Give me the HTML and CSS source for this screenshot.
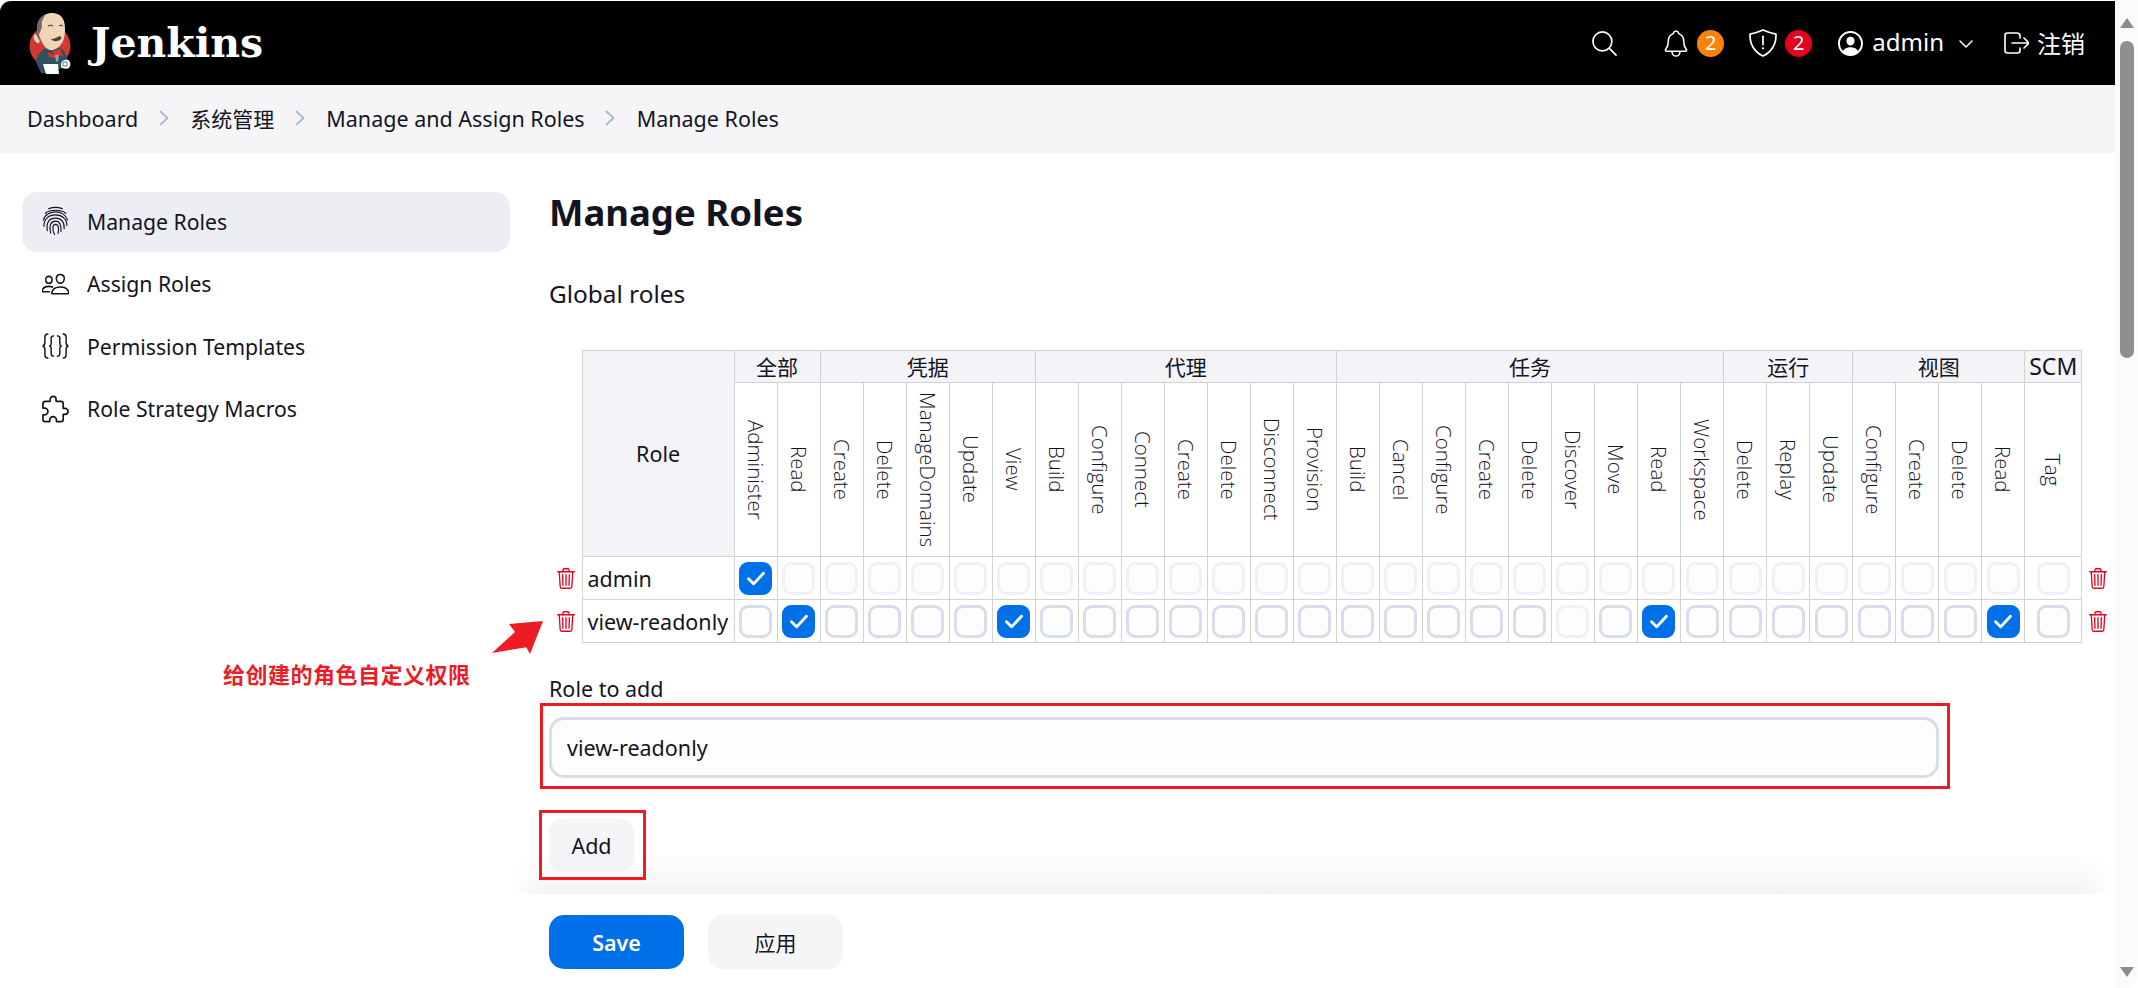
FILE: index.html
```html
<!DOCTYPE html>
<html lang="zh">
<head>
<meta charset="utf-8">
<title>Manage Roles</title>
<link rel="stylesheet" href="styles.css">
</head>
<body>
<svg class="defs" width="0" height="0" aria-hidden="true">
  <symbol id="trash" viewBox="64 32 384 448"><g fill="none" stroke="currentColor" stroke-width="28" stroke-linecap="round" stroke-linejoin="round"><path d="M112 112l20 320c.95 18.49 14.4 32 32 32h184c17.67 0 30.87-13.51 32-32l20-320"/><path d="M80 112h352"/><path d="M192 112V72a23.93 23.93 0 0124-24h80a23.93 23.93 0 0124 24v40M256 176v224M184 176l8 224M328 176l-8 224"/></g></symbol>
  <symbol id="check" viewBox="0 0 16 16"><path d="M3 8.500l3.400 3.400L13 4.800" fill="none" stroke="#fff" stroke-width="1.900" stroke-linecap="round" stroke-linejoin="round"/></symbol>
  <symbol id="crumb" viewBox="0 0 10 16"><path d="M1.5 1.5L8.5 8l-7 6.5" fill="none" stroke="#a7b9cf" stroke-width="1.8" stroke-linecap="round" stroke-linejoin="round"/></symbol>
</svg>
<div class="frame">
  <div class="page">
    <header class="topbar">
      <div class="brand">
        <svg class="logo" viewBox="0 0 44 62" aria-hidden="true">
          <circle cx="21" cy="34" r="20.5" fill="#d33833"/>
          <path d="M7 50c1-8 6-13 12-15l12 1c5 3 7 7 8 13l-2 7-8 1-3 4H12z" fill="#335061"/>
          <path d="M9 20C6 8 15 1 23 1c8 0 13 5 13 15 0 4 0 9-2 13-2 5-8 10-13 9-5-1-9-8-12-18z" fill="#f0d6b7"/>
          <path d="M9 24C6 13 9 5 17 2c-3 4-5 8-4 13-1 3-2 6-4 9z" fill="#6d6b6d"/>
          <path d="M7 22c-3-1-4 6 1 9 2 1 3-1 3-2z" fill="#f0d6b7" stroke="#49728b" stroke-width=".6"/>
          <path d="M19 14c2-1 4-1 5 0M30 14c1-1 3-1 4 0" fill="none" stroke="#2a2a2a" stroke-width="1"/>
          <path d="M22 27c3 0 6-2 9-3 1 1 2 2 1 3-3 3-8 3-10 0z" fill="#54403a"/>
          <path d="M19 40l6 3-1-4 7-2 3 7-6-1-2 3-6-1z" fill="#e2322f"/>
          <path d="M26 43l4 0-1 6-2 1z" fill="#8fa3ad"/>
          <path d="M14 52h15l1 10H17z" fill="#fff"/>
          <path d="M32 52c0-3 4-5 7-4 3 1 3 6 1 8-2 1-6 1-8-1z" fill="#f4f4f4"/>
          <path d="M34 50h4v4h-4z" fill="none" stroke="#49728b" stroke-width=".8"/>
        </svg>
        <span class="brand-name">Jenkins</span>
      </div>
      <nav class="actions">
        <svg class="ic ic-search" viewBox="48 48 416 416"><g fill="none" stroke="#fff" stroke-width="28"><path d="M221.09 64a157.09 157.09 0 10157.09 157.09A157.1 157.1 0 00221.09 64z"/><path stroke-linecap="round" d="M338.29 338.29L448 448"/></g></svg>
        <svg class="ic ic-bell" viewBox="64 32 384 448"><path d="M427.68 351.43C402 320 383.87 304 383.87 217.35 383.87 138 343.35 109.73 310 96c-4.43-1.82-8.6-6-9.95-10.55C294.2 65.54 277.8 48 256 48s-38.21 17.55-44 37.47c-1.35 4.6-5.52 8.71-9.95 10.53-33.39 13.75-73.87 41.92-73.87 121.35C128.13 304 110 320 84.32 351.43 73.68 364.45 83 384 101.61 384h308.88c18.51 0 27.77-19.61 17.19-32.57zM320 384v16a64 64 0 01-128 0v-16" fill="none" stroke="#fff" stroke-width="26" stroke-linecap="round" stroke-linejoin="round"/></svg>
        <span class="badge badge-warn">2</span>
        <svg class="ic ic-shield" viewBox="32 32 448 448"><g fill="none" stroke="#fff" stroke-width="28" stroke-linecap="round" stroke-linejoin="round"><path d="M463.1 112.37C373.68 96.33 336.71 84.45 256 48c-80.71 36.45-117.68 48.33-207.1 64.37C32.7 369.13 240.58 457.79 256 464c15.42-6.21 223.3-94.87 207.1-351.63z"/><path d="M256 150v130"/></g><circle cx="256" cy="340" r="18" fill="#fff"/></svg>
        <span class="badge badge-danger">2</span>
        <svg class="ic ic-user" viewBox="48 48 416 416"><path fill="#fff" d="M258.9 48C141.92 46.42 46.42 141.92 48 258.9c1.56 112.19 92.91 203.54 205.1 205.1 117 1.6 212.48-93.9 210.88-210.88C462.44 140.91 371.09 49.56 258.9 48zm126.42 327.25a4 4 0 01-6.14-.32 124.27 124.27 0 00-32.35-29.59C321.37 329 289.11 320 256 320s-65.37 9-90.83 25.34a124.24 124.24 0 00-32.35 29.58 4 4 0 01-6.14.32A175.32 175.32 0 0180 259c-1.63-97.31 78.22-178.76 175.57-179S432 158.81 432 256a175.32 175.32 0 01-46.68 119.25z"/><path fill="#fff" d="M256 144c-19.72 0-37.55 7.39-50.22 20.82s-19 32-17.57 51.93C191.11 256 221.52 288 256 288s64.83-32 67.79-71.25c1.48-19.74-4.8-38.14-17.68-51.82C293.39 151.44 275.59 144 256 144z"/></svg>
        <span class="user-name">admin</span>
        <svg class="ic ic-chev" viewBox="0 0 14 8"><path d="M1 1l6 6 6-6" fill="none" stroke="#fff" stroke-width="1.5" stroke-linecap="round" stroke-linejoin="round"/></svg>
        <svg class="ic ic-logout" viewBox="48 80 400 352"><path d="M304 336v40a40 40 0 01-40 40H104a40 40 0 01-40-40V136a40 40 0 0140-40h152c22.09 0 48 17.91 48 40v40M368 336l80-80-80-80M176 256h256" fill="none" stroke="#fff" stroke-width="26" stroke-linecap="round" stroke-linejoin="round"/></svg>
        <span class="logout-text">注销</span>
      </nav>
    </header>
    <div class="crumbs">
      <span>Dashboard</span><svg class="crumb-sep"><use href="#crumb"/></svg>
      <span class="zh">系统管理</span><svg class="crumb-sep"><use href="#crumb"/></svg>
      <span>Manage and Assign Roles</span><svg class="crumb-sep"><use href="#crumb"/></svg>
      <span>Manage Roles</span>
    </div>
    <div class="content">
      <aside class="side">
        <a class="side-item active">
          <svg class="side-ic" viewBox="0 0 28 30"><g fill="none" stroke="#14141f" stroke-width="1.2" stroke-linecap="round"><path d="M7 2.200C11 .6 17 .6 21 2.200"/><path d="M3.500 7C8 2.800 20 2.800 24.500 7"/><path d="M1.500 14C3 8 9 5.500 14 5.500c6 0 11 3.500 12.500 8.500"/><path d="M2 20.500C1.800 13 7 8.700 14 8.700s12 4.300 11.800 11"/><path d="M5.500 25C4 16 8 12 14 12s9.500 4 9 11"/><path d="M9 27.500C7 19 9.500 15.200 14 15.200S20 19 19.700 26"/><path d="M13 29c-2.500-5-2.500-10.500 1-10.500s3.500 4 2.700 9.500"/></g></svg>
          <span>Manage Roles</span>
        </a>
        <a class="side-item">
          <svg class="side-ic" viewBox="32 90 448 330"><g fill="none" stroke="#14141f" stroke-width="26" stroke-linecap="round" stroke-linejoin="round"><path d="M402 168c-2.93 40.67-33.1 72-66 72s-63.12-31.32-66-72c-3-42.31 26.37-72 66-72s69 30.46 66 72z"/><path d="M336 304c-65.17 0-127.84 32.37-143.54 95.41-2.08 8.34 3.15 16.59 11.72 16.59h263.65c8.57 0 13.77-8.25 11.72-16.59C463.85 336.360 401.18 304 336 304z"/><path d="M200 185.94c-2.34 32.48-26.72 58.060-53 58.060s-50.7-25.57-53-58.060C91.61 152.15 115.340 128 147 128s55.39 24.77 53 57.94z"/><path d="M206 306c-18.05-8.27-37.93-11.45-59-11.45-52 0-102.1 25.85-114.65 76.2-1.65 6.66 2.53 13.25 9.37 13.25H154"/></g></svg>
          <span>Assign Roles</span>
        </a>
        <a class="side-item">
          <svg class="side-ic" viewBox="0 0 28 28"><g fill="none" stroke="#14141f" stroke-width="1.5" stroke-linecap="round" stroke-linejoin="round"><path d="M6 1.500C3.500 1.500 3 3 3 5v5c0 2-.5 3.500-2 4 1.500.5 2 2 2 4v5c0 2 .5 3.500 3 3.500"/><path d="M12 3.500C10 3.500 9.500 4.500 9.500 6v5.500c0 1.500-.5 2.200-1.500 2.500 1 .3 1.500 1 1.500 2.500V22c0 1.500.5 2.500 2.500 2.500"/><path d="M22 1.500c2.500 0 3 1.500 3 3.500v5c0 2 .5 3.500 2 4-1.500.5-2 2-2 4v5c0 2-.5 3.500-3 3.500"/><path d="M16 3.500c2 0 2.500 1 2.500 2.500v5.500c0 1.500.5 2.200 1.500 2.500-1 .3-1.500 1-1.500 2.500V22c0 1.500-.5 2.500-2.500 2.500"/></g></svg>
          <span>Permission Templates</span>
        </a>
        <a class="side-item">
          <svg class="side-ic" viewBox="32 32 448 448"><path d="M413.66 246.1H386a2 2 0 01-2-2v-77.24A38.86 38.86 0 00345.14 128H267.9a2 2 0 01-2-2V98.34c0-27.14-21.5-49.86-48.64-50.33a49.53 49.53 0 00-50.4 49.53V126a2 2 0 01-2 2H87.62A39.74 39.74 0 0048 167.62V238a2 2 0 002 2h26.91c29.37 0 53.68 25.48 54.09 54.85.42 29.87-23.51 57.15-53.29 57.15H50a2 2 0 00-2 2v70.38A39.74 39.74 0 0087.62 464H158a2 2 0 002-2v-20.93c0-30.28 24.75-56.35 55-57.06 30.1-.7 57 20.31 57 50.28V462a2 2 0 002 2h71.14A38.86 38.86 0 00384 425.14v-78a2 2 0 012-2h28.48c27.63 0 49.52-22.67 49.52-50.4s-23.2-48.64-50.34-48.64z" fill="none" stroke="#14141f" stroke-width="28" stroke-linecap="round" stroke-linejoin="round"/></svg>
          <span>Role Strategy Macros</span>
        </a>
      </aside>
      <main class="main">
        <div class="form">
          <h1 class="title">Manage Roles</h1>
          <h2 class="subtitle">Global roles</h2>
          <table class="roles">
            <colgroup>
              <col class="c-del"><col class="c-role">
              <col class="c"><col class="c"><col class="c"><col class="c"><col class="c"><col class="c"><col class="c"><col class="c"><col class="c"><col class="c"><col class="c"><col class="c"><col class="c"><col class="c"><col class="c"><col class="c"><col class="c"><col class="c"><col class="c"><col class="c"><col class="c"><col class="c"><col class="c"><col class="c"><col class="c"><col class="c"><col class="c"><col class="c"><col class="c"><col class="c">
              <col class="c-scm"><col class="c-del">
            </colgroup>
            <thead>
              <tr class="groups">
                <td class="blank" rowspan="2"></td>
                <th class="role-head" rowspan="2">Role</th>
                <th colspan="2">全部</th><th colspan="5">凭据</th><th colspan="7">代理</th><th colspan="9">任务</th><th colspan="3">运行</th><th colspan="4">视图</th><th class="scm">SCM</th>
                <td class="blank" rowspan="2"></td>
              </tr>
              <tr class="perms">
                <th><span>Administer</span></th><th><span>Read</span></th>
                <th><span>Create</span></th><th><span>Delete</span></th><th><span>ManageDomains</span></th><th><span>Update</span></th><th><span>View</span></th>
                <th><span>Build</span></th><th><span>Configure</span></th><th><span>Connect</span></th><th><span>Create</span></th><th><span>Delete</span></th><th><span>Disconnect</span></th><th><span>Provision</span></th>
                <th><span>Build</span></th><th><span>Cancel</span></th><th><span>Configure</span></th><th><span>Create</span></th><th><span>Delete</span></th><th><span>Discover</span></th><th><span>Move</span></th><th><span>Read</span></th><th><span>Workspace</span></th>
                <th><span>Delete</span></th><th><span>Replay</span></th><th><span>Update</span></th>
                <th><span>Configure</span></th><th><span>Create</span></th><th><span>Delete</span></th><th><span>Read</span></th>
                <th><span>Tag</span></th>
              </tr>
            </thead>
            <tbody>
              <tr class="row-muted">
                <td class="blank del-l"><svg class="trash"><use href="#trash"/></svg></td>
                <td class="name">admin</td>
                <td><span class="cb on"><svg><use href="#check"/></svg></span></td>
                <td><span class="cb"></span></td><td><span class="cb"></span></td><td><span class="cb"></span></td><td><span class="cb"></span></td><td><span class="cb"></span></td><td><span class="cb"></span></td>
                <td><span class="cb"></span></td><td><span class="cb"></span></td><td><span class="cb"></span></td><td><span class="cb"></span></td><td><span class="cb"></span></td><td><span class="cb"></span></td><td><span class="cb"></span></td>
                <td><span class="cb"></span></td><td><span class="cb"></span></td><td><span class="cb"></span></td><td><span class="cb"></span></td><td><span class="cb"></span></td><td><span class="cb"></span></td><td><span class="cb"></span></td><td><span class="cb"></span></td><td><span class="cb"></span></td>
                <td><span class="cb"></span></td><td><span class="cb"></span></td><td><span class="cb"></span></td>
                <td><span class="cb"></span></td><td><span class="cb"></span></td><td><span class="cb"></span></td><td><span class="cb"></span></td>
                <td><span class="cb"></span></td>
                <td class="blank del-r"><svg class="trash"><use href="#trash"/></svg></td>
              </tr>
              <tr>
                <td class="blank del-l"><svg class="trash"><use href="#trash"/></svg></td>
                <td class="name">view-readonly</td>
                <td><span class="cb"></span></td>
                <td><span class="cb on"><svg><use href="#check"/></svg></span></td>
                <td><span class="cb"></span></td><td><span class="cb"></span></td><td><span class="cb"></span></td><td><span class="cb"></span></td>
                <td><span class="cb on"><svg><use href="#check"/></svg></span></td>
                <td><span class="cb"></span></td><td><span class="cb"></span></td><td><span class="cb"></span></td><td><span class="cb"></span></td><td><span class="cb"></span></td><td><span class="cb"></span></td><td><span class="cb"></span></td>
                <td><span class="cb"></span></td><td><span class="cb"></span></td><td><span class="cb"></span></td><td><span class="cb"></span></td><td><span class="cb"></span></td>
                <td><span class="cb faint"></span></td>
                <td><span class="cb"></span></td>
                <td><span class="cb on"><svg><use href="#check"/></svg></span></td>
                <td><span class="cb"></span></td>
                <td><span class="cb"></span></td><td><span class="cb"></span></td><td><span class="cb"></span></td>
                <td><span class="cb"></span></td><td><span class="cb"></span></td><td><span class="cb"></span></td>
                <td><span class="cb on"><svg><use href="#check"/></svg></span></td>
                <td><span class="cb"></span></td>
                <td class="blank del-r"><svg class="trash"><use href="#trash"/></svg></td>
              </tr>
            </tbody>
          </table>
          <label class="field-label" for="role-name">Role to add</label>
          <input class="field" id="role-name" type="text" value="view-readonly">
          <button class="btn btn-add" type="button">Add</button>
        </div>
        <div class="bar">
          <button class="btn btn-save" type="button">Save</button>
          <button class="btn btn-apply" type="button">应用</button>
        </div>
      </main>
    </div>
  </div>
  <div class="scrollbar">
    <span class="arrow arrow-up"></span>
    <span class="thumb"></span>
    <span class="arrow arrow-down"></span>
  </div>
</div>
<div class="mark mark-input"></div>
<div class="mark mark-add"></div>
<svg class="note-arrow" viewBox="0 0 54 36" aria-hidden="true"><path d="M52 1L18 4l6 8L1 33l33-5.500 1.500 0L39 34z" fill="#ed1c24"/></svg>
<div class="note">给创建的角色自定义权限</div>
</body>
</html>
```
FILE: styles.css
```css
* { box-sizing: border-box; }
html, body { margin: 0; height: 100%; overflow: hidden; background: #fff; }
body {
  font-family: "Noto Sans", "Noto Sans CJK SC", sans-serif;
  font-size: 21.500px;
  color: #14141f;
  position: relative;
}
.defs { position: absolute; }
.frame {
  display: flex;
  height: 987px;
  margin-top: 1px;
  border-radius: 11px 0 11px 0;
  overflow: hidden;
}
.page { flex: 1; min-width: 0; display: flex; flex-direction: column; }

/* top bar */
.topbar {
  height: 84px;
  flex: none;
  background: #000;
  color: #fff;
  display: flex;
  align-items: center;
  justify-content: space-between;
  padding: 0 30px 0 29px;
}
.brand { display: flex; align-items: center; gap: 18px; }
.logo { width: 44px; height: 62px; }
.brand-name {
  font-family: "DejaVu Serif", serif;
  font-weight: 700;
  font-size: 41px;
  line-height: 1;
}
.actions { display: flex; align-items: center; }
.ic { display: block; flex: none; }
.ic-search { width: 25px; height: 25px; }
.ic-bell { width: 24px; height: 27px; margin-left: 47px; }
.badge {
  width: 27px; height: 27px; border-radius: 50%;
  margin-left: 9px;
  display: flex; align-items: center; justify-content: center;
  color: #fff; font-size: 20px; line-height: 1;
}
.badge-warn { background: #fe820a; }
.badge-danger { background: #e6001f; margin-left: 8px; }
.ic-shield { width: 28px; height: 28px; margin-left: 25px; }
.ic-user { width: 25px; height: 25px; margin-left: 26px; }
.user-name { margin-left: 9px; font-size: 24px; line-height: 1; margin-top: -2px; }
.ic-chev { width: 14px; height: 8px; margin-left: 15px; margin-top: 2px; }
.ic-logout { width: 25px; height: 22px; margin-left: 31px; }
.logout-text { margin-left: 8px; font-size: 24px; line-height: 1; font-family: "Noto Sans CJK SC", sans-serif; }

/* breadcrumbs */
.crumbs {
  height: 68px;
  flex: none;
  background: #f5f5f8;
  display: flex;
  align-items: center;
  padding: 0 0 2px 27px;
}
.crumbs .zh { font-size: 21px; font-family: "Noto Sans CJK SC", sans-serif; }
.crumb-sep { width: 10px; height: 16px; margin: 0 21.500px 0 20.500px; flex: none; }

/* layout */
.content { flex: 1; min-height: 0; display: flex; }
.side { width: 549px; flex: none; padding: 39px 39px 0 22px; display: flex; flex-direction: column; gap: 2.500px; }
.side-item {
  height: 60px;
  border-radius: 15px;
  display: flex;
  align-items: center;
  padding: 0 0 2px 20px;
  gap: 18px;
  font-size: 21.200px;
}
.side-item.active { background: #edeef3; }
.side-ic { width: 27px; height: 30px; flex: none; }
.main { flex: 1; min-width: 0; display: flex; flex-direction: column; }
.form { flex: 1; min-height: 0; }
.title { margin: 36px 0 0; font-size: 36.500px; line-height: 46px; font-weight: 700; }
.subtitle { margin: 44px 0 0; font-size: 24.400px; line-height: 30px; font-weight: 400; }

/* matrix */
.roles {
  border-collapse: collapse;
  table-layout: fixed;
  width: 1566px;
  margin-top: 41px;
}
.c-del { width: 33px; }
.c-role { width: 152px; }
.c { width: 43px; }
.c-scm { width: 57px; }
.roles th, .roles td { border: 1px solid #d2d2ce; padding: 0; text-align: center; font-weight: 400; }
.roles .blank { border: 0; }
.groups th { height: 32px; background: #f3f3f8; font-family: "Noto Sans CJK SC", "Noto Sans", sans-serif; font-size: 21px; line-height: 1; }
.groups .role-head { font-family: "Noto Sans", sans-serif; font-size: 21.500px; }
.groups .scm { font-family: "Noto Sans", sans-serif; font-size: 23px; }
.perms th { height: 174px; background: #fff; }
.perms span {
  display: inline-block;
  writing-mode: vertical-rl;
  font-family: "Open Sans", "Noto Sans", sans-serif;
  font-weight: 300;
  font-size: 20.500px;
  line-height: 1;
  vertical-align: middle;
  color: #14141f;
}
.roles tbody td { height: 43px; }
.roles tbody .name { text-align: left; padding-left: 5px; white-space: nowrap; overflow: hidden; }
.cb {
  display: inline-flex;
  align-items: center;
  justify-content: center;
  width: 33px;
  height: 33px;
  border: 3px solid #d7deea;
  border-radius: 9px;
  background: #fdfdfd;
  vertical-align: middle;
}
.row-muted .cb, .cb.faint { border-color: #eff1f6; }
.cb.on, .row-muted .cb.on { background: #0070e8; border-color: #0070e8; }
.cb svg { width: 24px; height: 24px; display: block; flex: none; }
.trash { width: 18px; height: 21px; color: #e6001f; display: block; }
.del-l .trash { margin: 0 0 0 8px; }
.del-r .trash { margin: 0 0 0 7px; }

/* form */
.field-label { display: block; margin-top: 32px; line-height: 28px; }
.field {
  display: block;
  width: 1390px;
  height: 61px;
  margin-top: 14px;
  border: 3px solid #d7deea;
  border-radius: 15px;
  background: #fdfdfd;
  padding: 0 15px;
  font: inherit;
  color: inherit;
  outline: 0;
}
.btn { display: block; border: 0; border-radius: 15px; font: inherit; padding: 0; color: inherit; }
.btn-add { width: 85px; height: 54px; margin-top: 40px; background: #f5f5f8; }
.bar {
  flex: none;
  height: 94px;
  margin-right: 20px;
  background: #fff;
  display: flex;
  gap: 24px;
  padding-top: 21px;
  position: relative;
}
.bar::before {
  content: "";
  position: absolute;
  left: -35px;
  right: -15px;
  bottom: 100%;
  height: 42px;
  pointer-events: none;
  background: linear-gradient(to bottom, rgba(240, 240, 242, 0), rgba(240, 240, 242, .8));
  -webkit-mask-image: linear-gradient(to right, transparent, #000 30px, #000 calc(100% - 30px), transparent);
  mask-image: linear-gradient(to right, transparent, #000 30px, #000 calc(100% - 30px), transparent);
}
.btn-save { width: 135px; height: 54px; background: #0070e8; color: #fff; font-weight: 600; }
.btn-apply { width: 135px; height: 54px; background: #f5f5f8; font-family: "Noto Sans CJK SC", sans-serif; font-size: 21px; }

/* scrollbar */
.scrollbar {
  width: 23px;
  flex: none;
  background: #fbfbfb;
  display: flex;
  flex-direction: column;
  align-items: center;
  padding: 17px 0 11px;
}
.arrow { width: 0; height: 0; border-left: 7px solid transparent; border-right: 7px solid transparent; }
.arrow-up { border-bottom: 10px solid #8c8c8c; }
.arrow-down { border-top: 10px solid #8c8c8c; margin-top: auto; }
.thumb { width: 14px; height: 317px; margin-top: 13px; border-radius: 7px; background: #8f8f8f; }

/* annotations drawn over the screenshot */
.mark { position: absolute; border: 3px solid #ed1c24; }
.mark-input { left: 540px; top: 703px; width: 1410px; height: 86px; }
.mark-add { left: 539px; top: 810px; width: 107px; height: 70px; }
.note-arrow { position: absolute; left: 491px; top: 620px; width: 54px; height: 36px; }
.note {
  position: absolute;
  left: 223px;
  top: 660px;
  font-family: "Noto Sans CJK SC", sans-serif;
  font-weight: 700;
  font-size: 22px;
  letter-spacing: .5px;
  line-height: 26px;
  color: #ed1c24;
}
```
